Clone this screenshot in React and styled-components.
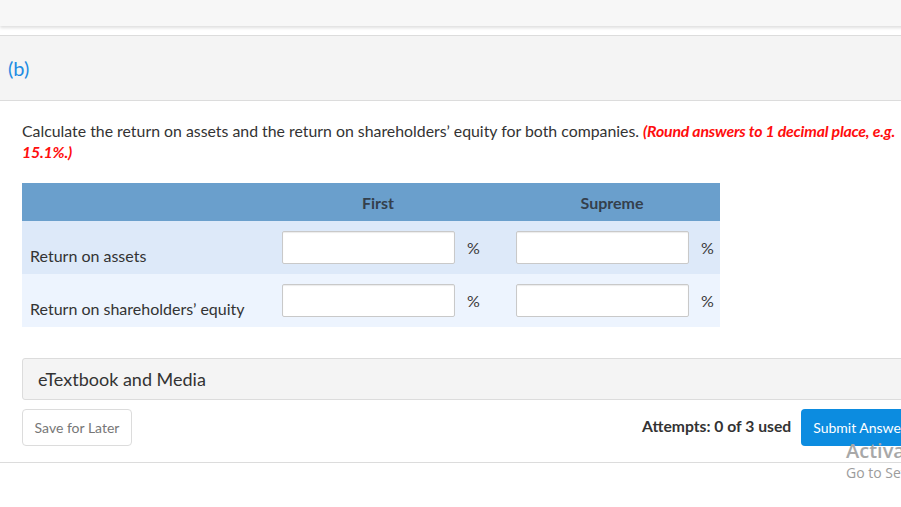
import React from "react";
import styled, { createGlobalStyle } from "styled-components";

const Global = createGlobalStyle`
  html, body { margin: 0; padding: 0; background: #fff; overflow: hidden; }
  body { font-family: Lato, "Open Sans", Arial, sans-serif; color: #333; }
  * { box-sizing: border-box; }
`;

const Page = styled.div`
  position: relative;
  width: 940px;
  min-height: 507px;
`;

const TopBar = styled.div`
  height: 26px;
  background: #f7f7f7;
  box-shadow: 0 2px 3px rgba(0, 0, 0, 0.13);
`;

const SectionHeader = styled.div`
  margin-top: 9px;
  height: 66px;
  border-top: 1px solid #dcdcdc;
  border-bottom: 1px solid #dcdcdc;
  background: #f4f4f4;
  display: flex;
  align-items: center;
  padding-left: 8px;
  font-size: 20px;
  color: #1e8ce3;
`;

const Content = styled.div`
  padding: 19px 22px 0;
`;

const Question = styled.p`
  margin: 0;
  font-size: 15.85px;
  line-height: 21px;
  color: #333;
`;

const Hint = styled.span`
  color: #ff0d0d;
  font-weight: 700;
  font-style: italic;
  letter-spacing: -0.2px;
`;

const Table = styled.div`
  margin-top: 21px;
  width: 698px;
  display: grid;
  grid-template-columns: 248px 234px 216px;
`;

const HeadCell = styled.div`
  height: 38px;
  background: #6a9fcc;
  display: flex;
  align-items: center;
  padding-left: 12px;
  font-size: 16px;
  font-weight: 700;
  color: #34404c;
`;

const HeadText = styled.span`
  width: 192px;
  text-align: center;
`;

const LabelCell = styled.div`
  height: 53px;
  background: ${(p) => p.$bg};
  display: flex;
  align-items: flex-end;
  padding: 0 0 8px 8px;
  font-size: 16px;
  line-height: 21px;
  color: #333;
`;

const DataCell = styled.div`
  height: 53px;
  background: ${(p) => p.$bg};
  display: flex;
  align-items: center;
  gap: 12px;
  padding-left: 12px;
`;

const Input = styled.input`
  width: 173px;
  height: 33px;
  border: 1px solid #c9c9c9;
  border-radius: 2px;
  background: #fff;
  box-shadow: inset 0 1px 1px rgba(0, 0, 0, 0.08);
  font-family: inherit;
  font-size: 16px;
  padding: 0 8px;
  outline: none;
`;

const Unit = styled.span`
  font-size: 16px;
  color: #3a3a3a;
`;

const MediaBox = styled.div`
  margin-top: 31px;
  height: 42px;
  width: 920px;
  border: 1px solid #dcdcdc;
  border-radius: 3px;
  background: #f4f4f4;
  display: flex;
  align-items: center;
  padding-left: 15px;
  font-size: 18px;
  color: #333;
`;

const ActionRow = styled.div`
  margin-top: 9px;
  display: flex;
  justify-content: space-between;
  align-items: center;
`;

const SaveButton = styled.button`
  height: 37px;
  width: 110px;
  border: 1px solid #dcdcdc;
  border-radius: 4px;
  background: #fff;
  font-family: inherit;
  font-size: 14px;
  color: #777;
  padding: 0;
`;

const RightGroup = styled.div`
  display: flex;
  align-items: center;
  gap: 10px;
`;

const Attempts = styled.span`
  font-size: 15.7px;
  font-weight: 700;
  color: #333;
  margin-top: -4px;
`;

const SubmitButton = styled.button`
  height: 37px;
  border: none;
  border-radius: 4px;
  background: #0c8ce0;
  color: #fff;
  font-family: inherit;
  font-size: 14px;
  padding: 0 12px;
  white-space: nowrap;
`;

const Divider = styled.div`
  margin-top: 16px;
  border-top: 1px solid #dcdcdc;
`;

const Watermark = styled.div`
  position: absolute;
  left: 846px;
  top: 437px;
  font-family: "Open Sans", "Noto Sans", sans-serif;
  color: #9c9c9c;
  white-space: nowrap;
  pointer-events: none;
`;

const WatermarkTitle = styled.div`
  font-size: 20px;
  line-height: 27px;
  font-weight: 600;
  color: #a8a8a8;
`;

const WatermarkSub = styled.div`
  font-size: 14px;
  line-height: 18px;
`;

const rows = [
  { label: "Return on assets", bg: "#dde9f9" },
  { label: "Return on shareholders\u2019 equity", bg: "#edf4fe" },
];

export default function App() {
  return (
    <Page>
      <Global />
      <TopBar />
      <SectionHeader>(b)</SectionHeader>
      <Content>
        <Question>
          Calculate the return on assets and the return on shareholders’ equity for both companies.{" "}
          <Hint>(Round answers to 1 decimal place, e.g. 15.1%.)</Hint>
        </Question>
        <Table>
          <HeadCell />
          <HeadCell>
            <HeadText>First</HeadText>
          </HeadCell>
          <HeadCell>
            <HeadText>Supreme</HeadText>
          </HeadCell>
          {rows.map((r) => (
            <React.Fragment key={r.label}>
              <LabelCell $bg={r.bg}>{r.label}</LabelCell>
              <DataCell $bg={r.bg}>
                <Input type="text" />
                <Unit>%</Unit>
              </DataCell>
              <DataCell $bg={r.bg}>
                <Input type="text" />
                <Unit>%</Unit>
              </DataCell>
            </React.Fragment>
          ))}
        </Table>
        <MediaBox>eTextbook and Media</MediaBox>
        <ActionRow>
          <SaveButton>Save for Later</SaveButton>
          <RightGroup>
            <Attempts>Attempts: 0 of 3 used</Attempts>
            <SubmitButton>Submit Answer</SubmitButton>
          </RightGroup>
        </ActionRow>
      </Content>
      <Divider />
      <Watermark>
        <WatermarkTitle>Activate Windows</WatermarkTitle>
        <WatermarkSub>Go to Settings to activate Windows.</WatermarkSub>
      </Watermark>
    </Page>
  );
}
